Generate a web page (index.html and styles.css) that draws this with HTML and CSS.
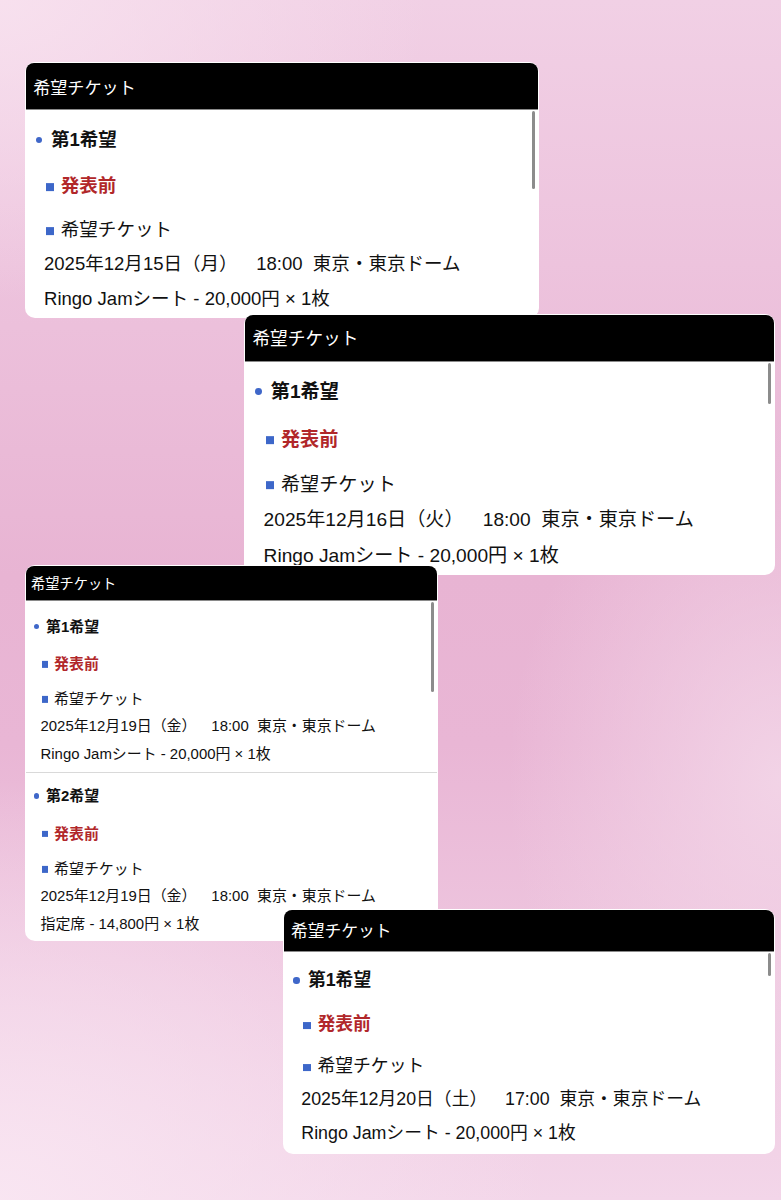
FILE: index.html
```html
<!DOCTYPE html>
<html lang="ja">
<head>
<meta charset="utf-8">
<title>希望チケット</title>
<link rel="stylesheet" href="styles.css">
</head>
<body>
<main class="canvas">
  <section class="card card-a">
    <header class="card-head">希望チケット</header>
    <div class="card-body">
      <div class="choice">
        <p class="row title"><span class="dot"></span>第1希望</p>
        <p class="row status"><span class="sq"></span>発表前</p>
        <p class="row label"><span class="sq"></span>希望チケット</p>
        <p class="row date">2025年12月15日（月）　&ensp;18:00  東京・東京ドーム</p>
        <p class="row seat">Ringo Jamシート - 20,000円 × 1枚</p>
      </div>
    </div>
    <span class="scroll"></span>
  </section>

  <section class="card card-b">
    <header class="card-head">希望チケット</header>
    <div class="card-body">
      <div class="choice">
        <p class="row title"><span class="dot"></span>第1希望</p>
        <p class="row status"><span class="sq"></span>発表前</p>
        <p class="row label"><span class="sq"></span>希望チケット</p>
        <p class="row date">2025年12月16日（火）　&ensp;18:00  東京・東京ドーム</p>
        <p class="row seat">Ringo Jamシート - 20,000円 × 1枚</p>
      </div>
    </div>
    <span class="scroll"></span>
  </section>

  <section class="card card-c">
    <header class="card-head">希望チケット</header>
    <div class="card-body">
      <div class="choice">
        <p class="row title"><span class="dot"></span>第1希望</p>
        <p class="row status"><span class="sq"></span>発表前</p>
        <p class="row label"><span class="sq"></span>希望チケット</p>
        <p class="row date">2025年12月19日（金）　&ensp;18:00  東京・東京ドーム</p>
        <p class="row seat">Ringo Jamシート - 20,000円 × 1枚</p>
      </div>
      <div class="choice">
        <p class="row title"><span class="dot"></span>第2希望</p>
        <p class="row status"><span class="sq"></span>発表前</p>
        <p class="row label"><span class="sq"></span>希望チケット</p>
        <p class="row date">2025年12月19日（金）　&ensp;18:00  東京・東京ドーム</p>
        <p class="row seat">指定席 - 14,800円 × 1枚</p>
      </div>
    </div>
    <span class="scroll"></span>
  </section>

  <section class="card card-d">
    <header class="card-head">希望チケット</header>
    <div class="card-body">
      <div class="choice">
        <p class="row title"><span class="dot"></span>第1希望</p>
        <p class="row status"><span class="sq"></span>発表前</p>
        <p class="row label"><span class="sq"></span>希望チケット</p>
        <p class="row date">2025年12月20日（土）　&ensp;17:00  東京・東京ドーム</p>
        <p class="row seat">Ringo Jamシート - 20,000円 × 1枚</p>
      </div>
    </div>
    <span class="scroll"></span>
  </section>
</main>
</body>
</html>
```

FILE: styles.css
```css
* { box-sizing: border-box; }

html, body {
  margin: 0;
  padding: 0;
}

body {
  font-family: "Liberation Sans", "Noto Sans CJK JP", sans-serif;
  color: #111;
}

.canvas {
  display: flow-root;
  min-height: 1200px;
  padding-top: 62px;
  overflow: hidden;
  background:
    radial-gradient(ellipse 70% 35% at 0% 100%, rgba(249, 230, 242, 0.95), rgba(249, 230, 242, 0)),
    radial-gradient(ellipse 55% 25% at 0% 0%, rgba(248, 226, 239, 0.9), rgba(248, 226, 239, 0)),
    radial-gradient(ellipse 35% 30% at 100% 65%, rgba(243, 214, 232, 0.9), rgba(243, 214, 232, 0)),
    linear-gradient(180deg, #f1d0e5 0%, #edc3dd 22%, #e8b4d3 48%, #e9b6d5 62%, #eec6df 80%, #f3d6e9 100%);
}

/* ---------- card ---------- */

.card {
  position: relative;
  background: #fff;
  border-radius: 10px;
  padding: 1px 1px 0;
}

.card-a {
  font-size: 18px;
  width: 514px;
  margin-left: 25px;
}

.card-b {
  font-size: 18.6px;
  width: 531px;
  margin-left: 244px;
  margin-top: -4px;
}

.card-c {
  font-size: 14.5px;
  width: 413px;
  margin-left: 25px;
  margin-top: -10px;
}

.card-d {
  font-size: 17.3px;
  width: 492px;
  margin-left: 283px;
  margin-top: -32px;
}

.card-head {
  display: flex;
  align-items: center;
  height: 47px;
  padding-left: 0.42em;
  background: #000;
  color: #fff;
  font-size: 0.95em;
  border-radius: 8px 8px 0 0;
  border-bottom: 1px solid #8a8a8a;
}

.card-c .card-head { height: 35px; font-size: 0.98em; padding-left: 0.36em; }
.card-d .card-head { height: 42px; font-size: 0.97em; }

.card-body {
  padding-top: 1px;
  border-radius: 0 0 10px 10px;
}

.card-b .card-body { padding-top: 0; }
.card-c .card-body { padding-top: 2px; }

.choice {
  padding-bottom: 0.11em;
}

.card-c .choice { padding-bottom: 4px; }
.card-c .choice + .choice {
  border-top: 1px solid #d9d9d9;
  padding-bottom: 3px;
}

.card-d .choice { padding-bottom: 5px; }

/* ---------- rows ---------- */

.row {
  margin: 0;
  font-size: 1.03em;
  line-height: 1.835em;
  height: 1.835em;
  display: flex;
  align-items: center;
  white-space: pre;
}

.title {
  margin-top: 0.648em;
  padding-left: 0.524em;
  font-weight: bold;
}

.status {
  margin-top: 0.648em;
  padding-left: 1.078em;
  font-weight: bold;
  color: #b1272a;
}

.label {
  margin-top: 0.52em;
  padding-left: 1.078em;
}

.date {
  line-height: 1.883em;
  height: 1.883em;
  padding-left: 0.971em;
}

.seat {
  padding-left: 0.971em;
}

.dot {
  flex: none;
  width: 0.36em;
  height: 0.36em;
  border-radius: 50%;
  background: #3f67c9;
  margin-right: 0.46em;
}

.sq {
  flex: none;
  width: 0.42em;
  height: 0.42em;
  background: #3d67c9;
  margin-right: 0.38em;
  transform: translateY(0.06em);
}

/* ---------- scrollbar overlay ---------- */

.scroll {
  position: absolute;
  right: 4px;
  width: 3px;
  border-radius: 2px;
  background: #8c8c8c;
}

.card-a .scroll { top: 49px; height: 78px; }
.card-b .scroll { top: 49px; height: 41px; }
.card-c .scroll { top: 37px; height: 90px; }
.card-d .scroll { top: 44px; height: 23px; }
```
